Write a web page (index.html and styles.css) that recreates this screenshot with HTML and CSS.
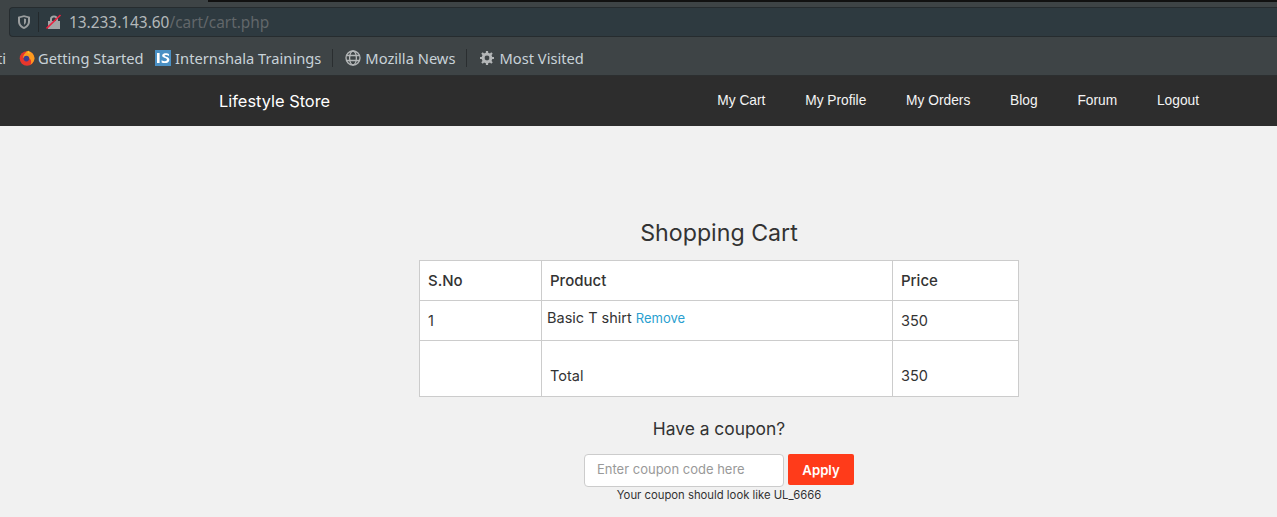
FILE: index.html
```html
<!DOCTYPE html>
<html lang="en">
<head>
    <meta charset="UTF-8">
    <meta name="viewport" content="width=device-width, initial-scale=1.0">
    <title>Lifestyle Store</title>
    <link rel="stylesheet" href="styles.css">
</head>
<body>
    <div class="browser">
        <div class="tabstrip"><div class="tabstrip-dark"></div></div>
        <div class="toolbar">
            <div class="urlbar">
                <svg class="shield" width="14" height="16" viewBox="0 0 14 16">
                    <path d="M7 1.2 L13 2.8 V7.5 C13 11 10.5 13.6 7 15 C3.5 13.6 1 11 1 7.5 V2.8 Z M7 3 L3 4.1 V7.5 C3 10 4.6 11.8 7 13 C9.4 11.8 11 10 11 7.5 V4.1 Z" fill="#9a9d9e" fill-rule="evenodd"/>
                    <path d="M7 4.5 L9 5 V7.5 C9 9 8.2 10 7 10.8 Z" fill="#9a9d9e"/>
                </svg>
                <span class="urlbar-sep"></span>
                <svg class="lock" width="16" height="16" viewBox="0 0 16 16">
                    <path d="M4 7 V5 C4 2.8 5.6 1.5 8 1.5 C10.4 1.5 12 2.8 12 5 V7 H14 V15 H2 V7 Z M6 7 H10 V5 C10 4 9.2 3.4 8 3.4 C6.8 3.4 6 4 6 5 Z" fill="#a3a5a6" fill-rule="evenodd"/>
                    <path d="M0.5 14.5 L14.5 1" stroke="#e8213f" stroke-width="1.7"/>
                </svg>
                <span class="url"><span class="url-host">13.233.143.60</span>/cart/cart.php</span>
            </div>
        </div>
        <div class="bookmarks">
            <span class="bm-cut">ti</span>
            <span class="bm bm-first">
                <svg width="16" height="16" viewBox="0 0 16 16">
                    <circle cx="8" cy="8.5" r="7.3" fill="#e8372c"/>
                    <path d="M8 1 C12 1 15.5 4.5 15.5 8.5 C15.5 11 13.5 13.5 11.5 14.8 C13 11.5 12 9 9.5 8 L4 8 C4 5 6 3.5 8 1 Z" fill="#fb9b1f"/>
                    <circle cx="7.4" cy="8.6" r="2.8" fill="#3c3f8f"/>
                    <path d="M9.5 0.5 L11.2 3.5 L8.5 3 Z" fill="#ffc928"/>
                </svg>
                Getting Started
            </span>
            <span class="bm">
                <svg width="16" height="16" viewBox="0 0 16 16">
                    <rect width="16" height="16" fill="#4a90c4"/>
                    <rect x="2" y="3" width="2.6" height="10" fill="#fff"/>
                    <path d="M14 4.2 C12.8 3.2 8 2.5 7.2 5.3 C6.6 8 12 7.6 12 9.8 C12 11.6 8.6 11.4 6.6 10.2 V12.5 C9 13.6 14.3 13.5 14.4 9.7 C14.4 6.5 9.4 7 9.6 5.5 C9.8 4.5 12.4 5 14 6 Z" fill="#fff"/>
                </svg>
                Internshala Trainings
            </span>
            <span class="bm-sep"></span>
            <span class="bm">
                <svg width="16" height="16" viewBox="0 0 16 16" fill="none" stroke="#b4b7b8" stroke-width="1.3">
                    <circle cx="8" cy="8" r="7"/>
                    <ellipse cx="8" cy="8" rx="3.4" ry="7"/>
                    <path d="M1.5 5.5 H14.5 M1.5 10.5 H14.5"/>
                </svg>
                Mozilla News
            </span>
            <span class="bm-sep"></span>
            <span class="bm">
                <svg width="16" height="16" viewBox="0 0 16 16">
                    <circle cx="8" cy="8" r="4.2" fill="none" stroke="#b4b7b8" stroke-width="2.4"/>
                    <path d="M8 1 V15 M1 8 H15 M3 3 L13 13 M13 3 L3 13" stroke="#b4b7b8" stroke-width="2.2"/>
                    <circle cx="8" cy="8" r="2.4" fill="#3e4446"/>
                </svg>
                Most Visited
            </span>
        </div>
    </div>

    <nav class="navbar">
        <a class="brand" href="#">Lifestyle Store</a>
        <ul class="nav-links">
            <li><a href="#">My Cart</a></li>
            <li><a href="#">My Profile</a></li>
            <li><a href="#">My Orders</a></li>
            <li><a href="#">Blog</a></li>
            <li><a href="#">Forum</a></li>
            <li><a href="#">Logout</a></li>
        </ul>
    </nav>

    <main class="cart">
        <h2>Shopping Cart</h2>
        <table class="cart-table">
            <tr class="row-head">
                <th class="col-no">S.No</th>
                <th class="col-product">Product</th>
                <th>Price</th>
            </tr>
            <tr class="row-item">
                <td>1</td>
                <td class="item-name">Basic T shirt <a href="#">Remove</a></td>
                <td>350</td>
            </tr>
            <tr class="row-total">
                <td></td>
                <td>Total</td>
                <td>350</td>
            </tr>
        </table>
        <h4>Have a coupon?</h4>
        <form class="coupon">
            <input type="text" placeholder="Enter coupon code here">
            <button type="button">Apply</button>
        </form>
        <p class="coupon-hint">Your coupon should look like UL_6666</p>
    </main>
</body>
</html>
```

FILE: styles.css
```css
html, body { margin: 0; padding: 0; }
body { font-family: "Inter", "Liberation Sans", sans-serif; background-color: #f1f1f1; color: #333; height: 517px; overflow: hidden; }

/* browser chrome */
.browser { font-family: "Noto Sans", sans-serif; background-color: #3e4446; }
.tabstrip { height: 7px; }
.tabstrip-dark { margin-left: 208px; height: 2px; background: #111; }
.toolbar { padding-left: 9px; }
.urlbar { height: 30px; box-sizing: border-box; background: #2e3a40; border: 1px solid #262c2f; border-right: none; border-radius: 4px 0 0 4px; display: flex; align-items: center; }
.shield { margin-left: 7px; }
.urlbar-sep { width: 1px; height: 20px; background: #23292c; margin: 0 7px; }
.lock { margin-right: 7px; }
.url { font-size: 15.4px; color: #62676a; }
.url-host { color: #b4b8ba; }

.bookmarks { height: 34px; padding-top: 4px; display: flex; align-items: center; font-size: 14.7px; line-height: 20px; color: #c8d2d8; border-bottom: 1px solid #2c2f30; }
.bm-cut { width: 22px; margin-left: -3px; color: #c8d2d8; }
.bm { display: flex; align-items: center; gap: 4px; }
.bm-first { gap: 3px; margin-right: 11.5px; }
.bm-sep { width: 1px; height: 18px; background: #2a2e30; margin: 0 12px 0 11px; }

/* site navbar */
.navbar { height: 50px; background-color: #2d2d2d; display: flex; align-items: center; justify-content: space-between; padding: 0 78px 0 219px; }
.brand { color: #fff; text-decoration: none; font-size: 16.4px; }
.nav-links { list-style: none; margin: 0; padding: 0 0 2px; display: flex; gap: 39.8px; font-family: "Liberation Sans", sans-serif; font-size: 13.75px; }
.nav-links a { color: #f4f4f4; text-decoration: none; }

/* cart */
.cart { width: 600px; margin-left: 419px; padding-top: 93px; text-align: center; }
.cart h2 { margin: 0 0 13px; font-size: 23.2px; font-weight: 400; line-height: 28px; }
.cart-table { width: 600px; border-collapse: collapse; background: #fff; text-align: left; font-size: 14.5px; table-layout: fixed; }
.cart-table th, .cart-table td { border: 1px solid #ccc; padding: 8px; font-weight: 400; }
.col-no { width: 105px; }
.col-product { width: 334px; }
.row-head th { height: 23px; font-size: 15px; font-weight: 500; }
.row-item td { height: 23px; }
.row-item .item-name { padding: 0 8px 6px 5px; }
.item-name a { color: #2a9fd0; text-decoration: none; font-size: 13px; }
.row-total td { height: 35px; vertical-align: bottom; padding-bottom: 12px; }

.cart h4 { margin: 20px 0 13px; font-size: 17.4px; font-weight: 400; line-height: 24px; }
.coupon { display: flex; justify-content: center; gap: 4px; }
.coupon input { width: 200px; height: 33px; box-sizing: border-box; padding: 0 12px 3px; border: 1px solid #ccc; border-radius: 4px; background: #fff; font-family: inherit; font-size: 13px; }
.coupon input::placeholder { color: #999; }
.coupon button { width: 66px; height: 31px; border: none; border-radius: 2px; background-color: #ff3b1a; color: #fff; font-family: inherit; font-size: 13.2px; font-weight: 600; }
.coupon-hint { margin: 1px 0 0; font-size: 11.3px; line-height: 14px; }
```
